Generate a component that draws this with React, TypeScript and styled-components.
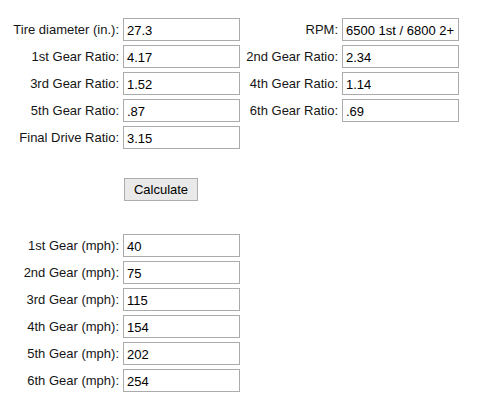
import styled, { createGlobalStyle } from "styled-components"

const GlobalStyle = createGlobalStyle`
  html, body {
    margin: 0;
    padding: 0;
    background: #fff;
  }
  body {
    font-family: "Liberation Sans", Arial, sans-serif;
    font-size: 13px;
    color: #111;
  }
`

const ratios: [string, string, string, string][] = [
  ["Tire diameter (in.):", "27.3", "RPM:", "6500 1st / 6800 2+"],
  ["1st Gear Ratio:", "4.17", "2nd Gear Ratio:", "2.34"],
  ["3rd Gear Ratio:", "1.52", "4th Gear Ratio:", "1.14"],
  ["5th Gear Ratio:", ".87", "6th Gear Ratio:", ".69"]
]

const speeds = [
  ["1st Gear (mph):", "40"],
  ["2nd Gear (mph):", "75"],
  ["3rd Gear (mph):", "115"],
  ["4th Gear (mph):", "154"],
  ["5th Gear (mph):", "202"],
  ["6th Gear (mph):", "254"]
]

const App = () => {
  return (
    <>
      <GlobalStyle />
      <Page>
        <Form>
          {ratios.map(([l1, v1, l2, v2]) => (
            <Row key={l1}>
              <Label>{l1}</Label>
              <Field defaultValue={v1} />
              <Label>{l2}</Label>
              <Field defaultValue={v2} />
            </Row>
          ))}
          <Row>
            <Label>Final Drive Ratio:</Label>
            <Field defaultValue="3.15" />
          </Row>
        </Form>
        <ButtonRow>
          <Button type="button">Calculate</Button>
        </ButtonRow>
        <Form>
          {speeds.map(([label, value]) => (
            <Row key={label}>
              <Label>{label}</Label>
              <Field defaultValue={value} readOnly />
            </Row>
          ))}
        </Form>
      </Page>
    </>
  )
}

const Page = styled.main`
  display: flex;
  flex-direction: column;
  padding-top: 18px;
  width: 478px;
`

const Form = styled.section`
  display: flex;
  flex-direction: column;
  gap: 4px;
`

const Row = styled.div`
  display: grid;
  grid-template-columns: 119px 117px 94px 117px;
  column-gap: 4px;
  align-items: center;
  height: 23px;
`

const Label = styled.label`
  text-align: right;
  white-space: nowrap;
  color: #151515;
`

const Field = styled.input`
  box-sizing: border-box;
  width: 100%;
  height: 23px;
  margin: 0;
  padding: 1px 3px 0;
  border: 1px solid #ababab;
  border-radius: 0;
  font-family: "Liberation Sans", Arial, sans-serif;
  font-size: 13px;
  color: #000;
  background: #fff;
  outline: none;
`

const ButtonRow = styled.div`
  display: flex;
  padding: 29px 0 33px 124px;
`

const Button = styled.button`
  box-sizing: border-box;
  width: 74px;
  height: 23px;
  padding: 0;
  border: 1px solid #adadad;
  border-radius: 0;
  background: #e9e9e9;
  font-family: "Liberation Sans", Arial, sans-serif;
  font-size: 13px;
  color: #000;
`

export default App
